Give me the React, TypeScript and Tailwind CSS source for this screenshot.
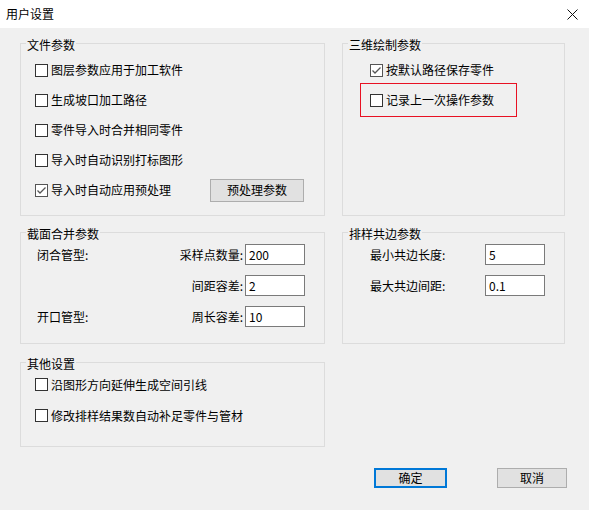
import React from "react";

function Check({ checked }: { checked?: boolean }) {
  return (
    <span
      className={`w-[13px] h-[13px] border ${checked ? "border-[#555555]" : "border-[#333333]"} bg-white flex items-center justify-center shrink-0`}
    >
      {checked && (
        <svg width="11" height="11" viewBox="0 0 11 11">
          <polyline points="1.5,5.5 4,8 9.5,2.5" fill="none" stroke="#555555" strokeWidth="1.3" />
        </svg>
      )}
    </span>
  );
}

function CheckRow({ label, checked, h = "h-[30px]" }: { label: string; checked?: boolean; h?: string }) {
  return (
    <div className={`flex items-center ${h} gap-[3px]`}>
      <Check checked={checked} />
      <span className="leading-[16px] whitespace-nowrap">{label}</span>
    </div>
  );
}

function Group({ title, className, children }: { title: string; className: string; children?: React.ReactNode }) {
  return (
    <div className={`relative border border-[#dcdcdc] ${className}`}>
      <span className="absolute left-[5px] top-[-7px] px-[1px] bg-[#f0f0f0] text-[12px] leading-[16px] whitespace-nowrap">
        {title}
      </span>
      {children}
    </div>
  );
}

function Field({ value }: { value: string }) {
  return (
    <div className="w-[60px] h-[21px] border border-[#7a7a7a] bg-white pl-[3px] flex items-center leading-[16px]">
      {value}
    </div>
  );
}

export default function App() {
  return (
    <div className="w-[589px] h-[510px] bg-[#f0f0f0] font-['Noto_Sans_CJK_SC','Noto_Sans',sans-serif] text-[12px] text-black flex flex-col">
      <div className="h-[28px] bg-white flex items-center justify-between pl-[6px] pr-[11px] shrink-0">
        <span className="leading-[16px]">用户设置</span>
        <svg width="11" height="11" viewBox="0 0 11 11">
          <line x1="0.5" y1="0.5" x2="10.5" y2="10.5" stroke="#111" strokeWidth="1" />
          <line x1="10.5" y1="0.5" x2="0.5" y2="10.5" stroke="#111" strokeWidth="1" />
        </svg>
      </div>

      <div className="flex pt-[15px] pl-[20px] gap-[17px]">
        <div className="w-[305px] flex flex-col">
          <Group title="文件参数" className="h-[173px] pt-[11px] pl-[14px] pr-[20px]">
            <CheckRow label="图层参数应用于加工软件" />
            <CheckRow label="生成坡口加工路径" />
            <CheckRow label="零件导入时合并相同零件" />
            <CheckRow label="导入时自动识别打标图形" />
            <div className="flex items-center justify-between h-[30px]">
              <CheckRow label="导入时自动应用预处理" checked />
              <div className="w-[94px] h-[23px] border border-[#adadad] bg-[#e1e1e1] flex items-center justify-center leading-[16px]">
                预处理参数
              </div>
            </div>
          </Group>

          <Group title="截面合并参数" className="mt-[16px] h-[112px] pt-[6px] pl-[16px] pr-[19px]">
            <div className="grid grid-cols-[auto_1fr_60px] gap-x-[2px] auto-rows-[31px] items-center">
              <span className="leading-[16px]">闭合管型:</span>
              <span className="text-right leading-[16px]">采样点数量:</span>
              <Field value="200" />
              <span />
              <span className="text-right leading-[16px]">间距容差:</span>
              <Field value="2" />
              <span className="leading-[16px]">开口管型:</span>
              <span className="text-right leading-[16px]">周长容差:</span>
              <Field value="10" />
            </div>
          </Group>

          <Group title="其他设置" className="mt-[18px] h-[85px] pt-[6px] pl-[14px]">
            <CheckRow label="沿图形方向延伸生成空间引线" h="h-[31px]" />
            <CheckRow label="修改排样结果数自动补足零件与管材" h="h-[31px]" />
          </Group>
        </div>

        <div className="w-[223px] flex flex-col">
          <Group title="三维绘制参数" className="h-[173px] pt-[11px] pl-[27px]">
            <CheckRow label="按默认路径保存零件" checked />
            <CheckRow label="记录上一次操作参数" />
            <div className="absolute left-[17px] top-[39px] w-[157px] h-[34px] border border-[#e81123] pointer-events-none" />
          </Group>

          <Group title="排样共边参数" className="mt-[16px] h-[112px] pt-[6px] pl-[27px] pr-[19px]">
            <div className="grid grid-cols-[1fr_60px] auto-rows-[31px] items-center">
              <span className="leading-[16px]">最小共边长度:</span>
              <Field value="5" />
              <span className="leading-[16px]">最大共边间距:</span>
              <Field value="0.1" />
            </div>
          </Group>
        </div>
      </div>

      <div className="flex justify-end pr-[22px] mt-[21px] gap-[50px]">
        <div className="w-[73px] h-[20px] border-2 border-[#0078d7] bg-[#e1e1e1] flex items-center justify-center leading-[16px]">
          确定
        </div>
        <div className="w-[70px] h-[20px] border border-[#adadad] bg-[#e1e1e1] flex items-center justify-center leading-[16px]">
          取消
        </div>
      </div>
    </div>
  );
}
